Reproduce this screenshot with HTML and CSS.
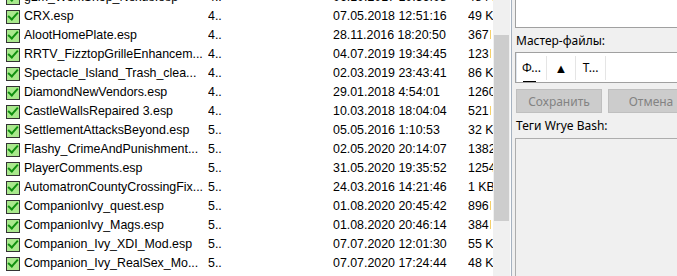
FILE: index.html
```html
<!DOCTYPE html>
<html lang="ru">
<head>
  <meta charset="UTF-8">
  <title>Wrye Bash — моды</title>
  <link rel="stylesheet" href="styles.css">
</head>
<body>
  <div id="mods">
    <div class="rows">
      <div class="row"><span class="chk"></span><span class="name">g2m_WorkShop_Nexus.esp</span><span class="order">4..</span><span class="date">06.10.2017 10:36:08</span><span class="size">484 KB</span></div>
      <div class="row"><span class="chk"></span><span class="name">CRX.esp</span><span class="order">4..</span><span class="date">07.05.2018 12:51:16</span><span class="size">49 KB</span></div>
      <div class="row"><span class="chk"></span><span class="name">AlootHomePlate.esp</span><span class="order">4..</span><span class="date">28.11.2016 18:20:50</span><span class="size">367<i></i></span></div>
      <div class="row"><span class="chk"></span><span class="name">RRTV_FizztopGrilleEnhancem...</span><span class="order">4..</span><span class="date">04.07.2019 19:34:45</span><span class="size">123<i></i></span></div>
      <div class="row"><span class="chk"></span><span class="name">Spectacle_Island_Trash_clea...</span><span class="order">4..</span><span class="date">02.03.2019 23:43:41</span><span class="size">86 KB</span></div>
      <div class="row"><span class="chk"></span><span class="name">DiamondNewVendors.esp</span><span class="order">4..</span><span class="date">29.01.2018 4:54:01</span><span class="size">1260 KB</span></div>
      <div class="row"><span class="chk"></span><span class="name">CastleWallsRepaired 3.esp</span><span class="order">4..</span><span class="date">10.03.2018 18:04:04</span><span class="size">521<i></i></span></div>
      <div class="row"><span class="chk"></span><span class="name">SettlementAttacksBeyond.esp</span><span class="order">5..</span><span class="date">05.05.2016 1:10:53</span><span class="size">32 KB</span></div>
      <div class="row"><span class="chk"></span><span class="name">Flashy_CrimeAndPunishment...</span><span class="order">5..</span><span class="date">02.05.2020 20:14:07</span><span class="size">1382 KB</span></div>
      <div class="row"><span class="chk"></span><span class="name">PlayerComments.esp</span><span class="order">5..</span><span class="date">31.05.2020 19:35:52</span><span class="size">1254 KB</span></div>
      <div class="row"><span class="chk"></span><span class="name">AutomatronCountyCrossingFix...</span><span class="order">5..</span><span class="date">24.03.2016 14:21:46</span><span class="size">1 KB</span></div>
      <div class="row"><span class="chk"></span><span class="name">CompanionIvy_quest.esp</span><span class="order">5..</span><span class="date">01.08.2020 20:45:42</span><span class="size">896<i></i></span></div>
      <div class="row"><span class="chk"></span><span class="name">CompanionIvy_Mags.esp</span><span class="order">5..</span><span class="date">01.08.2020 20:46:14</span><span class="size">384<i></i></span></div>
      <div class="row"><span class="chk"></span><span class="name">Companion_Ivy_XDI_Mod.esp</span><span class="order">5..</span><span class="date">07.07.2020 12:01:30</span><span class="size">55 KB</span></div>
      <div class="row"><span class="chk"></span><span class="name">Companion_Ivy_RealSex_Mo...</span><span class="order">5..</span><span class="date">07.07.2020 17:24:44</span><span class="size">48 KB</span></div>
      <div class="row"><span class="chk"></span><span class="name">Companion_Ivy_Extra.esp</span><span class="order">5..</span><span class="date">07.07.2020 17:30:02</span><span class="size">12 KB</span></div>
    </div>
  </div>
  <div class="scrollbar"><div class="thumb"></div></div>
  <div class="split"></div>
  <div id="details">
    <div class="notes"></div>
    <label class="caption">Мастер-файлы:</label>
    <div class="masters">
      <div class="head">
        <span class="col active">Ф...</span>
        <span class="col arrow">&#9650;</span>
        <span class="col">Т...</span>
      </div>
    </div>
    <div class="buttons">
      <button disabled>Сохранить</button>
      <button disabled>Отмена</button>
    </div>
    <label class="caption">Теги Wrye Bash:</label>
    <div class="tags"></div>
  </div>
</body>
</html>
```

FILE: styles.css
```css
html, body {
  margin: 0;
  height: 100%;
}
body {
  display: flex;
  height: 276px;
  overflow: hidden;
  background: #f0f0f0;
  font-family: "Liberation Sans", Arial, sans-serif;
}
#mods {
  flex: 0 0 493px;
  background: #fff;
  overflow: hidden;
  font-size: 12.4px;
  color: #000;
}
.rows {
  margin-top: -12px;
}
.row {
  display: grid;
  grid-template-columns: 24px 184px 125px 135px 25px;
  height: 19px;
  line-height: 19px;
  white-space: nowrap;
}
.row span {
  overflow: hidden;
}
.chk {
  width: 14px;
  height: 14px;
  margin: 3px 0 0 6px;
  box-sizing: border-box;
  border: 1px solid #333;
  background: #a9e88c;
  position: relative;
}
/* галочка */
.chk::after {
  content: "";
  position: absolute;
  left: 3px;
  top: -1px;
  width: 4px;
  height: 8px;
  border: solid #0f8f0f;
  border-width: 0 2px 2px 0;
  transform: rotate(42deg);
}
/* край обрезанной буквы K */
.size i {
  display: inline-block;
  width: 1px;
  height: 9px;
  margin-left: 1px;
  background: #f5d06a;
}
.scrollbar {
  flex: 0 0 17px;
  background: #f0f0f0;
}
.thumb {
  margin: 35px 1px 0;
  height: 186px;
  background: #cdcdcd;
}
.split {
  flex: 0 0 1px;
  background: #fcfcfc;
  border-right: 1px solid #a6b2c0;
}
#details {
  flex: 1;
  display: flex;
  flex-direction: column;
  padding-left: 3px;
  font-family: "Noto Sans", "Open Sans", sans-serif;
  font-size: 12px;
  overflow: hidden;
}
.notes {
  height: 27px;
  background: #fff;
  border: 1px solid #a0a0a0;
  border-top: none;
  border-right: none;
}
.caption {
  height: 24px;
  line-height: 26px;
  padding-left: 1px;
}
.masters {
  height: 29px;
  background: #fff;
  border: 1px solid #a0a0a0;
  border-right: none;
  box-shadow: inset 1px 0 0 #dfe6ee;
}
.head {
  display: flex;
  padding: 3px 0 0 1px;
}
.col {
  width: 29px;
  height: 24px;
  line-height: 24px;
  text-align: center;
  border-right: 1px solid #e5e5e5;
  position: relative;
}
.arrow {
  width: 28px;
  font-size: 13px;
}
.active::after {
  content: "";
  position: absolute;
  left: 6px;
  width: 13px;
  bottom: -2px;
  border-bottom: 1px solid #000;
}
.buttons {
  display: flex;
  gap: 6px;
  margin-top: 6px;
  padding-left: 1px;
}
.buttons button {
  flex: 0 0 86px;
  height: 24px;
  font: inherit;
  color: #838383;
  background: #cccccc;
  border: 1px solid #bfbfbf;
}
.tags {
  flex: 1;
  margin-top: 1px;
  border: 1px solid #adadad;
  border-right: none;
  border-bottom: none;
  background: #f0f0f0;
}
```
